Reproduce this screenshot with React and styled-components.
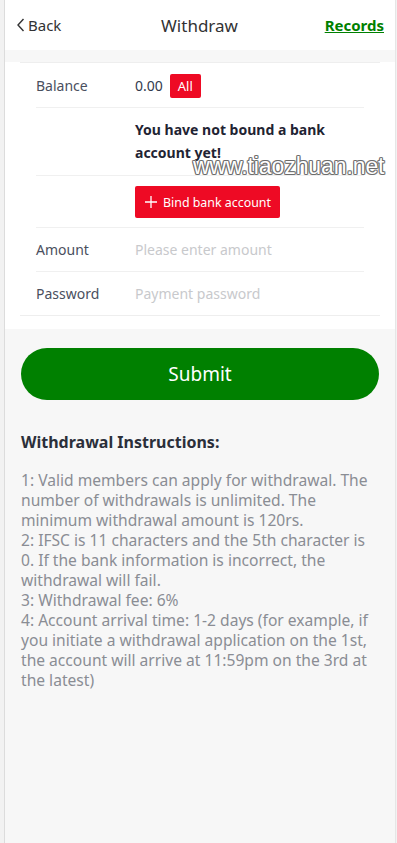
import React from "react";
import styled, { createGlobalStyle } from "styled-components";

const GlobalStyle = createGlobalStyle`
  html, body {
    margin: 0;
    padding: 0;
    background: #f2f2f2;
    font-family: "Noto Sans", "Open Sans", Arial, sans-serif;
  }
  * { box-sizing: border-box; }
`;

const Page = styled.div`
  margin: 0 1px 0 4px;
  min-height: 843px;
  background: #f7f7f7;
  border-left: 1px solid #dcdcdc;
  border-right: 1px solid #e6e6e6;
  position: relative;
`;

const NavBar = styled.div`
  height: 50px;
  background: #fff;
  display: flex;
  align-items: center;
  justify-content: space-between;
  padding: 0 11px 0 10px;
`;

const NavSide = styled.div`
  width: 90px;
  display: flex;
  align-items: center;
  justify-content: ${(p) => (p.$right ? "flex-end" : "flex-start")};
`;

const BackLink = styled.a`
  display: flex;
  align-items: center;
  gap: 1px;
  color: #323233;
  font-size: 15px;
  text-decoration: none;
  svg { margin-top: -1px; }
`;

const Title = styled.div`
  font-size: 17px;
  color: #323233;
`;

const RecordsLink = styled.a`
  color: #008000;
  font-size: 15px;
  font-weight: 700;
  text-decoration: underline;
`;

const Card = styled.div`
  margin-top: 12px;
  background: #fff;
  padding: 0 15px 13px;
`;

const CellGroup = styled.div`
  border-top: 1px solid #eeeeee;
  border-bottom: 1px solid #eeeeee;
  padding: 0 16px;
`;

const Cell = styled.div`
  display: flex;
  align-items: center;
  min-height: 44px;
  padding: 10px 0 9px;
  border-top: ${(p) => (p.$first ? "none" : "1px solid #f0f0f0")};
  font-size: 14px;
  line-height: 24px;
`;

const Label = styled.div`
  width: 99px;
  flex: none;
  color: #4a4f5e;
`;

const Value = styled.div`
  flex: 1;
  display: flex;
  align-items: center;
  gap: 7px;
  color: #323a4d;
`;

const Notice = styled.div`
  font-weight: 700;
  color: #1f2433;
  line-height: 23px;
  padding: 0 16px 2px 0;
`;

const SmallButton = styled.button`
  border: none;
  border-radius: 2px;
  background: #ee0a24;
  color: #fff;
  font-family: inherit;
  font-size: ${(p) => p.$fs || 13}px;
  height: ${(p) => p.$h || 24}px;
  padding: 0 ${(p) => p.$px || 8}px;
  display: flex;
  align-items: center;
  gap: 5px;
`;

const Field = styled.input`
  flex: 1;
  border: none;
  outline: none;
  padding: 0;
  font-family: inherit;
  font-size: 14px;
  line-height: 24px;
  color: #323233;
  background: transparent;
  &::placeholder { color: #c8c9cc; }
`;

const Body = styled.div`
  padding: 19px 16px 40px;
`;

const SubmitButton = styled.button`
  width: 100%;
  height: 52px;
  border: none;
  border-radius: 26px;
  background: #008000;
  color: #fff;
  font-family: inherit;
  font-size: 19px;
`;

const InstrTitle = styled.div`
  margin-top: 30px;
  font-size: 16px;
  font-weight: 700;
  color: #2b2f3a;
  line-height: 24px;
`;

const InstrText = styled.div`
  margin-top: 16px;
  font-size: 15.6px;
  line-height: 20px;
  color: #8a8d94;
`;

const Watermark = styled.div`
  position: absolute;
  left: 188px;
  top: 153px;
  font-family: "Liberation Sans", Arial, sans-serif;
  font-size: 23px;
  letter-spacing: -0.1px;
  color: #fff;
  pointer-events: none;
  text-shadow: -1px 0 #6b6b6b, 1px 0 #6b6b6b, 0 -1px #6b6b6b, 0 1px #6b6b6b,
    -1px -1px #9a9a9a, 1px 1px #9a9a9a, 1px -1px #9a9a9a, -1px 1px #9a9a9a;
`;

const lines = [
  "1: Valid members can apply for withdrawal. The number of withdrawals is unlimited. The minimum withdrawal amount is 120rs.",
  "2: IFSC is 11 characters and the 5th character is 0. If the bank information is incorrect, the withdrawal will fail.",
  "3: Withdrawal fee: 6%",
  "4: Account arrival time: 1-2 days (for example, if you initiate a withdrawal application on the 1st, the account will arrive at 11:59pm on the 3rd at the latest)",
];

export default function App() {
  return (
    <>
      <GlobalStyle />
      <Page>
        <NavBar>
          <NavSide>
            <BackLink href="#">
              <svg width="12" height="16" viewBox="0 0 12 16">
                <path d="M8.5 2 L3 8 L8.5 14" fill="none" stroke="#323233" strokeWidth="1.4" />
              </svg>
              Back
            </BackLink>
          </NavSide>
          <Title>Withdraw</Title>
          <NavSide $right>
            <RecordsLink href="#">Records</RecordsLink>
          </NavSide>
        </NavBar>
        <Card>
          <CellGroup>
            <Cell $first>
              <Label>Balance</Label>
              <Value>
                0.00
                <SmallButton>All</SmallButton>
              </Value>
            </Cell>
            <Cell>
              <Label />
              <Notice>You have not bound a bank account yet!</Notice>
            </Cell>
            <Cell>
              <Label />
              <SmallButton $h={32} $px={9} $fs={12.4}>
                <svg width="14" height="14" viewBox="0 0 14 14">
                  <path d="M7 1 V13 M1 7 H13" stroke="#fff" strokeWidth="1.3" />
                </svg>
                Bind bank account
              </SmallButton>
            </Cell>
            <Cell>
              <Label>Amount</Label>
              <Field placeholder="Please enter amount" />
            </Cell>
            <Cell>
              <Label>Password</Label>
              <Field type="password" placeholder="Payment password" />
            </Cell>
          </CellGroup>
        </Card>
        <Body>
          <SubmitButton>Submit</SubmitButton>
          <InstrTitle>Withdrawal Instructions:</InstrTitle>
          <InstrText>
            {lines.map((l) => (
              <div key={l}>{l}</div>
            ))}
          </InstrText>
        </Body>
        <Watermark>www.tiaozhuan.net</Watermark>
      </Page>
    </>
  );
}
